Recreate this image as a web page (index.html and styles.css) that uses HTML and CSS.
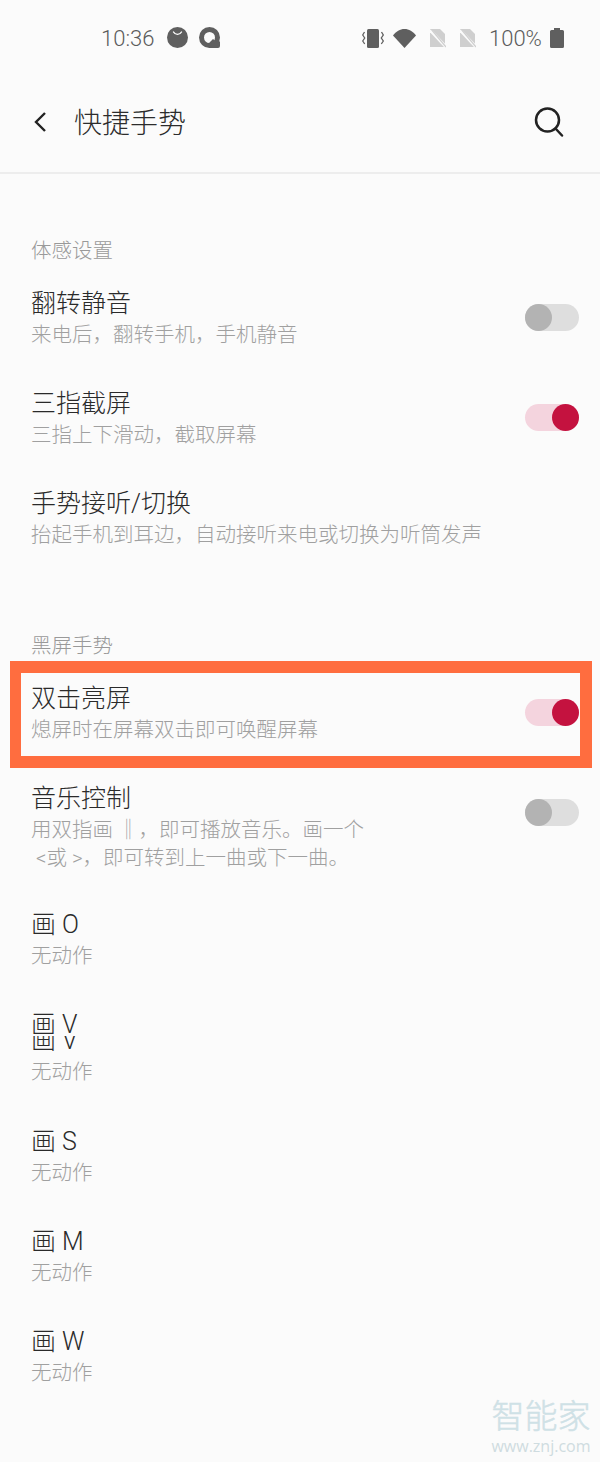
FILE: index.html
```html
<!DOCTYPE html>
<html lang="zh-CN">
<head>
<meta charset="utf-8">
<title>快捷手势</title>
<link rel="stylesheet" href="styles.css">
</head>
<body>
<div class="page">
  <div class="status">
    <div class="status-left">
      <span class="time">10:36</span>
      <svg class="st-icon" width="21" height="21" viewBox="0 0 21 21"><circle cx="10.5" cy="10.5" r="10.5" fill="#5f5f5f"/><path d="M6.500 5a4.600 4.600 0 0 0 8 0" fill="none" stroke="#fff" stroke-width="1.400" stroke-linecap="round"/></svg>
      <svg class="st-icon" width="22" height="21" viewBox="0 0 22 21"><circle cx="10.500" cy="10.500" r="8" fill="none" stroke="#5f5f5f" stroke-width="5"/><path d="M9 17l5-5 3 2.500h4v4.500a2 2 0 0 1-2 2H10z" fill="#5f5f5f"/></svg>
    </div>
    <div class="status-right">
      <svg width="23" height="20" viewBox="0 0 23 20"><rect x="5" y="0" width="12" height="19" rx="1.500" fill="#5f5f5f"/><path d="M2.500 3L0.700 6l2 3-2 3 2 3M19.500 3l1.800 3-2 3 2 3-2 3" fill="none" stroke="#5f5f5f" stroke-width="1.300"/></svg>
      <svg class="wifi" width="23" height="19" viewBox="0 0 23 19"><path d="M0 6.500C3 2.500 7 0 11.500 0S20 2.500 23 6.500L11.500 19z" fill="#5f5f5f"/></svg>
      <svg class="sim" width="16" height="19" viewBox="0 0 16 19"><path d="M0 0h10l5 5v13H0z" fill="#cfcfcf"/><path d="M0 1l16 17" stroke="#fbfbfb" stroke-width="3"/><path d="M1 0l15 18" stroke="#cfcfcf" stroke-width="1.200"/></svg>
      <svg class="sim" width="16" height="19" viewBox="0 0 16 19"><path d="M0 0h10l5 5v13H0z" fill="#cfcfcf"/><path d="M0 1l16 17" stroke="#fbfbfb" stroke-width="3"/><path d="M1 0l15 18" stroke="#cfcfcf" stroke-width="1.200"/></svg>
      <span class="pct">100%</span>
      <svg class="batt" width="14" height="20" viewBox="0 0 14 20"><path d="M4 0h6v2h2.500A1.500 1.500 0 0 1 14 3.500V18.500A1.500 1.500 0 0 1 12.500 20h-11A1.500 1.500 0 0 1 0 18.500V3.500A1.500 1.500 0 0 1 1.500 2H4z" fill="#5f5f5f"/></svg>
    </div>
  </div>

  <header class="appbar">
    <svg class="back" width="14" height="22" viewBox="0 0 14 22"><path d="M12 2L3 11l9 9" fill="none" stroke="#222" stroke-width="2.400"/></svg>
    <h1 class="title">快捷手势</h1>
    <svg class="search" width="30" height="30" viewBox="0 0 30 30"><circle cx="13.500" cy="13" r="11.500" fill="none" stroke="#222" stroke-width="2.500"/><path d="M21.500 21.500l6.500 7" fill="none" stroke="#222" stroke-width="2.500" stroke-linecap="round"/></svg>
  </header>

  <main class="content">
    <div class="label">体感设置</div>
    <div class="row">
      <div class="txt"><div class="t">翻转静音</div><div class="s">来电后，翻转手机，手机静音</div></div>
      <span class="toggle"></span>
    </div>
    <div class="row">
      <div class="txt"><div class="t">三指截屏</div><div class="s">三指上下滑动，截取屏幕</div></div>
      <span class="toggle on"></span>
    </div>
    <div class="row">
      <div class="txt"><div class="t">手势接听/切换</div><div class="s">抬起手机到耳边，自动接听来电或切换为听筒发声</div></div>
    </div>

    <div class="label second">黑屏手势</div>
    <div class="row">
      <div class="txt"><div class="t">双击亮屏</div><div class="s">熄屏时在屏幕双击即可唤醒屏幕</div></div>
      <span class="toggle on"></span>
    </div>
    <div class="row">
      <div class="txt"><div class="t">音乐控制</div><div class="s">用双指画 ‖，即可播放音乐。画一个<br>&nbsp;&lt;或 &gt;，即可转到上一曲或下一曲。</div></div>
      <span class="toggle"></span>
    </div>
    <div class="row">
      <div class="txt"><div class="t">画 O</div><div class="s">无动作</div></div>
    </div>
    <div class="row row-tall">
      <div class="txt">
        <div class="clip-top"><div class="t">画 V</div></div>
        <div class="clip-bottom"><div class="t">画 V</div></div>
        <div class="s">无动作</div>
      </div>
    </div>
    <div class="row">
      <div class="txt"><div class="t">画 S</div><div class="s">无动作</div></div>
    </div>
    <div class="row">
      <div class="txt"><div class="t">画 M</div><div class="s">无动作</div></div>
    </div>
    <div class="row">
      <div class="txt"><div class="t">画 W</div><div class="s">无动作</div></div>
    </div>
  </main>

  <div class="highlight"></div>
  <div class="watermark">
    <div class="wm-cn">智能家</div>
    <div class="wm-en">www.znj.com</div>
  </div>
</div>
</body>
</html>
```

FILE: styles.css
```css
* { box-sizing: border-box; }
html, body { margin: 0; padding: 0; }
body {
  background: #fbfbfb;
  font-family: Roboto, "Noto Sans CJK SC", sans-serif;
  font-weight: 300;
}
.page {
  position: relative;
  width: 600px;
  height: 1462px;
  overflow: hidden;
}
.status {
  height: 76px;
  display: flex;
  justify-content: space-between;
  padding: 27px 36px 0 101px;
}
.status-left, .status-right {
  display: flex;
  align-items: flex-start;
}
.time {
  font: 300 22px/23px Roboto, sans-serif;
  color: #5c5c5c;
  width: 66px;
}
.st-icon { margin-right: 11px; }
.status-right svg { margin-top: 2px; }
.status-right .wifi { margin-left: 8px; }
.status-right .sim { margin-left: 14px; }
.status-right .batt { margin-top: 1px; margin-left: 7px; }
.pct {
  font: 300 22px/23px Roboto, sans-serif;
  color: #5c5c5c;
  margin-left: 13px;
  width: 54px;
}
.appbar {
  height: 98px;
  border-bottom: 2px solid #ededed;
  display: flex;
  align-items: flex-start;
  padding: 0 36px 0 33px;
}
.back { margin-top: 35px; }
.title {
  margin: 26px 0 0 27px;
  font-size: 28px;
  line-height: 44px;
  font-weight: 300;
  color: #2c2c2c;
  flex: 1;
}
.search { margin-top: 31px; }
.content { padding: 62px 21px 0 31px; }
.label {
  height: 28px;
  font-size: 20.5px;
  line-height: 30px;
  color: #999;
  margin-bottom: 23px;
}
.label.second { margin-top: 44px; }
.row {
  min-height: 100px;
  padding-bottom: 36px;
  display: flex;
  justify-content: space-between;
  align-items: flex-start;
}
.row-tall { padding-bottom: 39px; }
.t {
  height: 32px;
  font-size: 25px;
  line-height: 34px;
  color: #2a2a2a;
}
.s {
  margin-top: 2px;
  font-size: 20.5px;
  line-height: 28px;
  color: #a0a0a0;
}
.clip-top { height: 26px; margin-bottom: 2px; overflow: hidden; }
.clip-bottom { height: 15px; margin-bottom: 7px; overflow: hidden; }
.clip-bottom .t { margin-top: -12px; }
.toggle {
  position: relative;
  display: block;
  width: 54px;
  height: 27px;
  margin-top: 17px;
  border-radius: 14px;
  background: #dedede;
}
.toggle::after {
  content: "";
  position: absolute;
  top: 0;
  left: 0;
  width: 27px;
  height: 27px;
  border-radius: 50%;
  background: #b3b3b3;
}
.toggle.on { background: #f4d4de; }
.toggle.on::after { left: 27px; background: #c4123f; }
.highlight {
  position: absolute;
  left: 10px;
  top: 661px;
  width: 582px;
  height: 107px;
  border: 12px solid #ff6d3f;
  border-left-width: 11px;
}
.watermark {
  position: absolute;
  left: 490px;
  top: 1397px;
  width: 102px;
  text-align: center;
}
.wm-cn {
  font-size: 33px;
  line-height: 40px;
  color: #cfe1e6;
  -webkit-text-stroke: 0.5px #cfe1e6;
}
.wm-en {
  font-family: "Open Sans", sans-serif;
  font-weight: 400;
  font-size: 16px;
  line-height: 18px;
  color: #cfdce0;
  white-space: nowrap;
}
```
